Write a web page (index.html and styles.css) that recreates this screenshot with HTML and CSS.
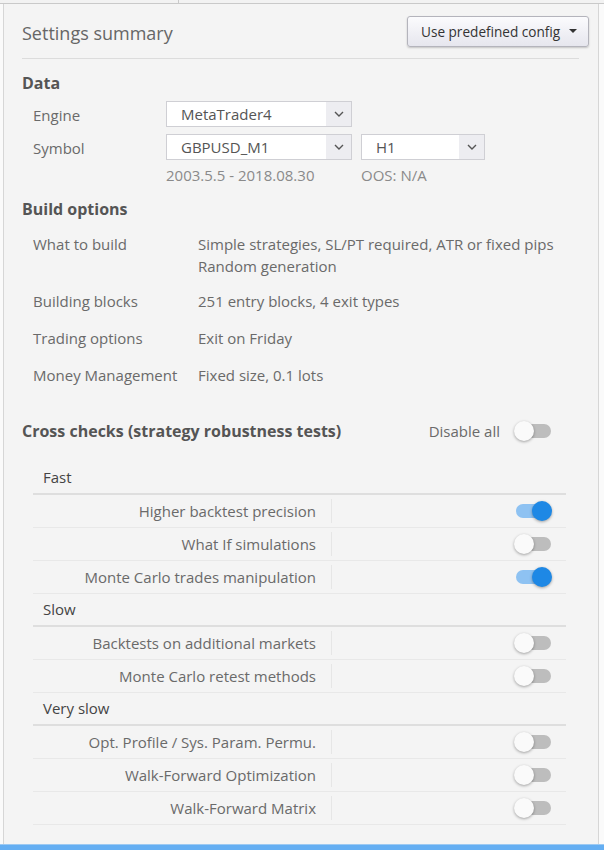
FILE: index.html
```html
<!DOCTYPE html>
<html>
<head>
<meta charset="utf-8">
<link rel="stylesheet" href="styles.css">
</head>
<body>
<div class="topbar"><div class="tab"></div></div>
<div class="panel">
  <div class="header">
    <h2 class="title">Settings summary</h2>
    <button class="btn">Use predefined config <span class="caret"></span></button>
  </div>
  <div class="hr"></div>

  <h3 class="sec sec1">Data</h3>
  <div class="data-grid">
    <div class="lbl">Engine</div>
    <div class="ctrls">
      <div class="select w186"><span class="val">MetaTrader4</span><span class="arr"><svg width="10" height="6" viewBox="0 0 10 6"><path d="M1 1l4 4 4-4" fill="none" stroke="#555" stroke-width="1.4"/></svg></span></div>
    </div>
    <div class="lbl">Symbol</div>
    <div class="ctrls">
      <div class="select w186"><span class="val">GBPUSD_M1</span><span class="arr"><svg width="10" height="6" viewBox="0 0 10 6"><path d="M1 1l4 4 4-4" fill="none" stroke="#555" stroke-width="1.4"/></svg></span></div>
      <div class="select w124"><span class="val">H1</span><span class="arr"><svg width="10" height="6" viewBox="0 0 10 6"><path d="M1 1l4 4 4-4" fill="none" stroke="#555" stroke-width="1.4"/></svg></span></div>
    </div>
    <div></div>
    <div class="ctrls muted">
      <span class="w186t">2003.5.5 - 2018.08.30</span>
      <span>OOS: N/A</span>
    </div>
  </div>

  <h3 class="sec sec2">Build options</h3>
  <div class="build-grid">
    <div class="lbl">What to build</div>
    <div class="v multi">Simple strategies, SL/PT required, ATR or fixed pips<br>Random generation</div>
    <div class="lbl">Building blocks</div>
    <div class="v">251 entry blocks, 4 exit types</div>
    <div class="lbl">Trading options</div>
    <div class="v">Exit on Friday</div>
    <div class="lbl">Money Management</div>
    <div class="v">Fixed size, 0.1 lots</div>
  </div>

  <div class="cc-head">
    <h3 class="sec">Cross checks (strategy robustness tests)</h3>
    <div class="disable">Disable all <span class="toggle"><span class="track"></span><span class="knob"></span></span></div>
  </div>

  <div class="table">
    <div class="group">Fast</div>
    <div class="row"><div class="name">Higher backtest precision</div><div class="sw"><span class="toggle on"><span class="track"></span><span class="knob"></span></span></div></div>
    <div class="row"><div class="name">What If simulations</div><div class="sw"><span class="toggle"><span class="track"></span><span class="knob"></span></span></div></div>
    <div class="row"><div class="name">Monte Carlo trades manipulation</div><div class="sw"><span class="toggle on"><span class="track"></span><span class="knob"></span></span></div></div>
    <div class="group">Slow</div>
    <div class="row"><div class="name">Backtests on additional markets</div><div class="sw"><span class="toggle"><span class="track"></span><span class="knob"></span></span></div></div>
    <div class="row"><div class="name">Monte Carlo retest methods</div><div class="sw"><span class="toggle"><span class="track"></span><span class="knob"></span></span></div></div>
    <div class="group">Very slow</div>
    <div class="row"><div class="name">Opt. Profile / Sys. Param. Permu.</div><div class="sw"><span class="toggle"><span class="track"></span><span class="knob"></span></span></div></div>
    <div class="row"><div class="name">Walk-Forward Optimization</div><div class="sw"><span class="toggle"><span class="track"></span><span class="knob"></span></span></div></div>
    <div class="row"><div class="name">Walk-Forward Matrix</div><div class="sw"><span class="toggle"><span class="track"></span><span class="knob"></span></span></div></div>
  </div>
</div>
<div class="bottombar"></div>
</body>
</html>
```

FILE: styles.css
```css
* { box-sizing: border-box; }
html, body { margin: 0; padding: 0; }
body {
  width: 604px;
  height: 850px;
  overflow: hidden;
  background: #fafafa;
  font-family: "Open Sans", "Noto Sans", sans-serif;
  font-size: 15px;
  color: #6a6a6a;
  display: flex;
  flex-direction: column;
}
.topbar {
  height: 4px;
  background: #f2f2f2;
  border-bottom: 1px solid #c9c9c9;
  flex: none;
}
.tab {
  width: 179px;
  height: 3px;
  border-right: 1px solid #c9c9c9;
}
.panel {
  flex: 1;
  margin-left: 3px;
  width: 596px;
  background: #f4f4f4;
  border-left: 1px solid #d6d6d6;
  border-right: 1px solid #d6d6d6;
  padding: 11px 9px 0 18px;
}
.header {
  display: flex;
  justify-content: space-between;
  align-items: center;
  height: 32px;
}
.title {
  margin: 0;
  font-size: 18px;
  font-weight: 400;
  color: #666;
  padding-top: 3px;
}
.btn {
  height: 31px;
  width: 182px;
  font-family: inherit;
  font-size: 13.6px;
  color: #333;
  border: 1px solid #b4b4bc;
  border-radius: 3px;
  background: linear-gradient(#fbfbfd, #e6e6ee);
  box-shadow: 0 1px 2px rgba(0,0,0,0.2);
  padding: 0 11px 0 13px;
  display: flex;
  align-items: center;
  justify-content: space-between;
}
.caret {
  width: 0; height: 0;
  border-left: 4px solid transparent;
  border-right: 4px solid transparent;
  border-top: 4px solid #333;
}
.hr {
  height: 1px;
  background: #dcdcdc;
  margin: 11px 10px 0 0;
}
.sec {
  margin: 0;
  font-size: 16px;
  font-weight: 700;
  color: #555;
  line-height: 20px;
}
.panel > .sec1 { margin-top: 14px; }
.panel > .sec2 { margin-top: 14px; }
.data-grid {
  display: grid;
  grid-template-columns: 133px auto;
  row-gap: 7px;
  margin-top: 8px;
  margin-left: 11px;
  align-items: center;
}
.data-grid .lbl { height: 26px; line-height: 29px; }
.ctrls { display: flex; gap: 9px; align-items: center; }
.muted { color: #8a8a8a; line-height: 20px; margin-top: -2px; }
.w186t { width: 186px; }
.select {
  height: 26px;
  background: #fff;
  border: 1px solid #cfcfd4;
  display: flex;
  align-items: stretch;
  color: #555;
}
.select .val { flex: 1; padding-left: 14px; line-height: 25px; }
.select .arr {
  width: 25px;
  background: #ededf1;
  display: flex;
  align-items: center;
  justify-content: center;
}
.w186 { width: 186px; }
.w124 { width: 124px; }
.build-grid {
  display: grid;
  grid-template-columns: 165px auto;
  row-gap: 15px;
  margin-top: 14px;
  margin-left: 11px;
  line-height: 22px;
}
.build-grid .multi { height: 42px; }
.cc-head {
  display: flex;
  justify-content: space-between;
  align-items: center;
  margin-top: 35px;
  padding-right: 37px;
}
.disable { display: flex; align-items: center; gap: 14px; }
.toggle {
  position: relative;
  display: inline-block;
  width: 38px;
  height: 20px;
}
.toggle .track {
  position: absolute;
  left: 2px; top: 3px;
  width: 35px; height: 14px;
  border-radius: 7px;
  background: #bdbdbd;
}
.toggle .knob {
  position: absolute;
  left: 0; top: 0;
  width: 20px; height: 20px;
  border-radius: 50%;
  background: #fafafa;
  box-shadow: 0 1px 3px rgba(0,0,0,0.35);
}
.toggle.on .track { background: #8ec2f2; }
.toggle.on .knob { left: 18px; background: #1e88e5; }
.table {
  margin: 21px 23px 0 11px;
}
.group {
  height: 33px;
  line-height: 30px;
  padding-left: 10px;
  color: #444;
  border-bottom: 2px solid #dedede;
}
.row {
  height: 33px;
  display: flex;
  align-items: center;
  border-bottom: 1px solid #e8e8e8;
}
.row .name {
  width: 299px;
  text-align: right;
  padding-right: 15px;
  border-right: 1px solid #e6e6e6;
  line-height: 24px;
}
.row .sw {
  flex: 1;
  display: flex;
  justify-content: flex-end;
  padding-right: 14px;
}
.bottombar {
  flex: none;
  height: 6px;
  background: #64aef2;
  border-top: 1px solid #9cc9f2;
}
```
